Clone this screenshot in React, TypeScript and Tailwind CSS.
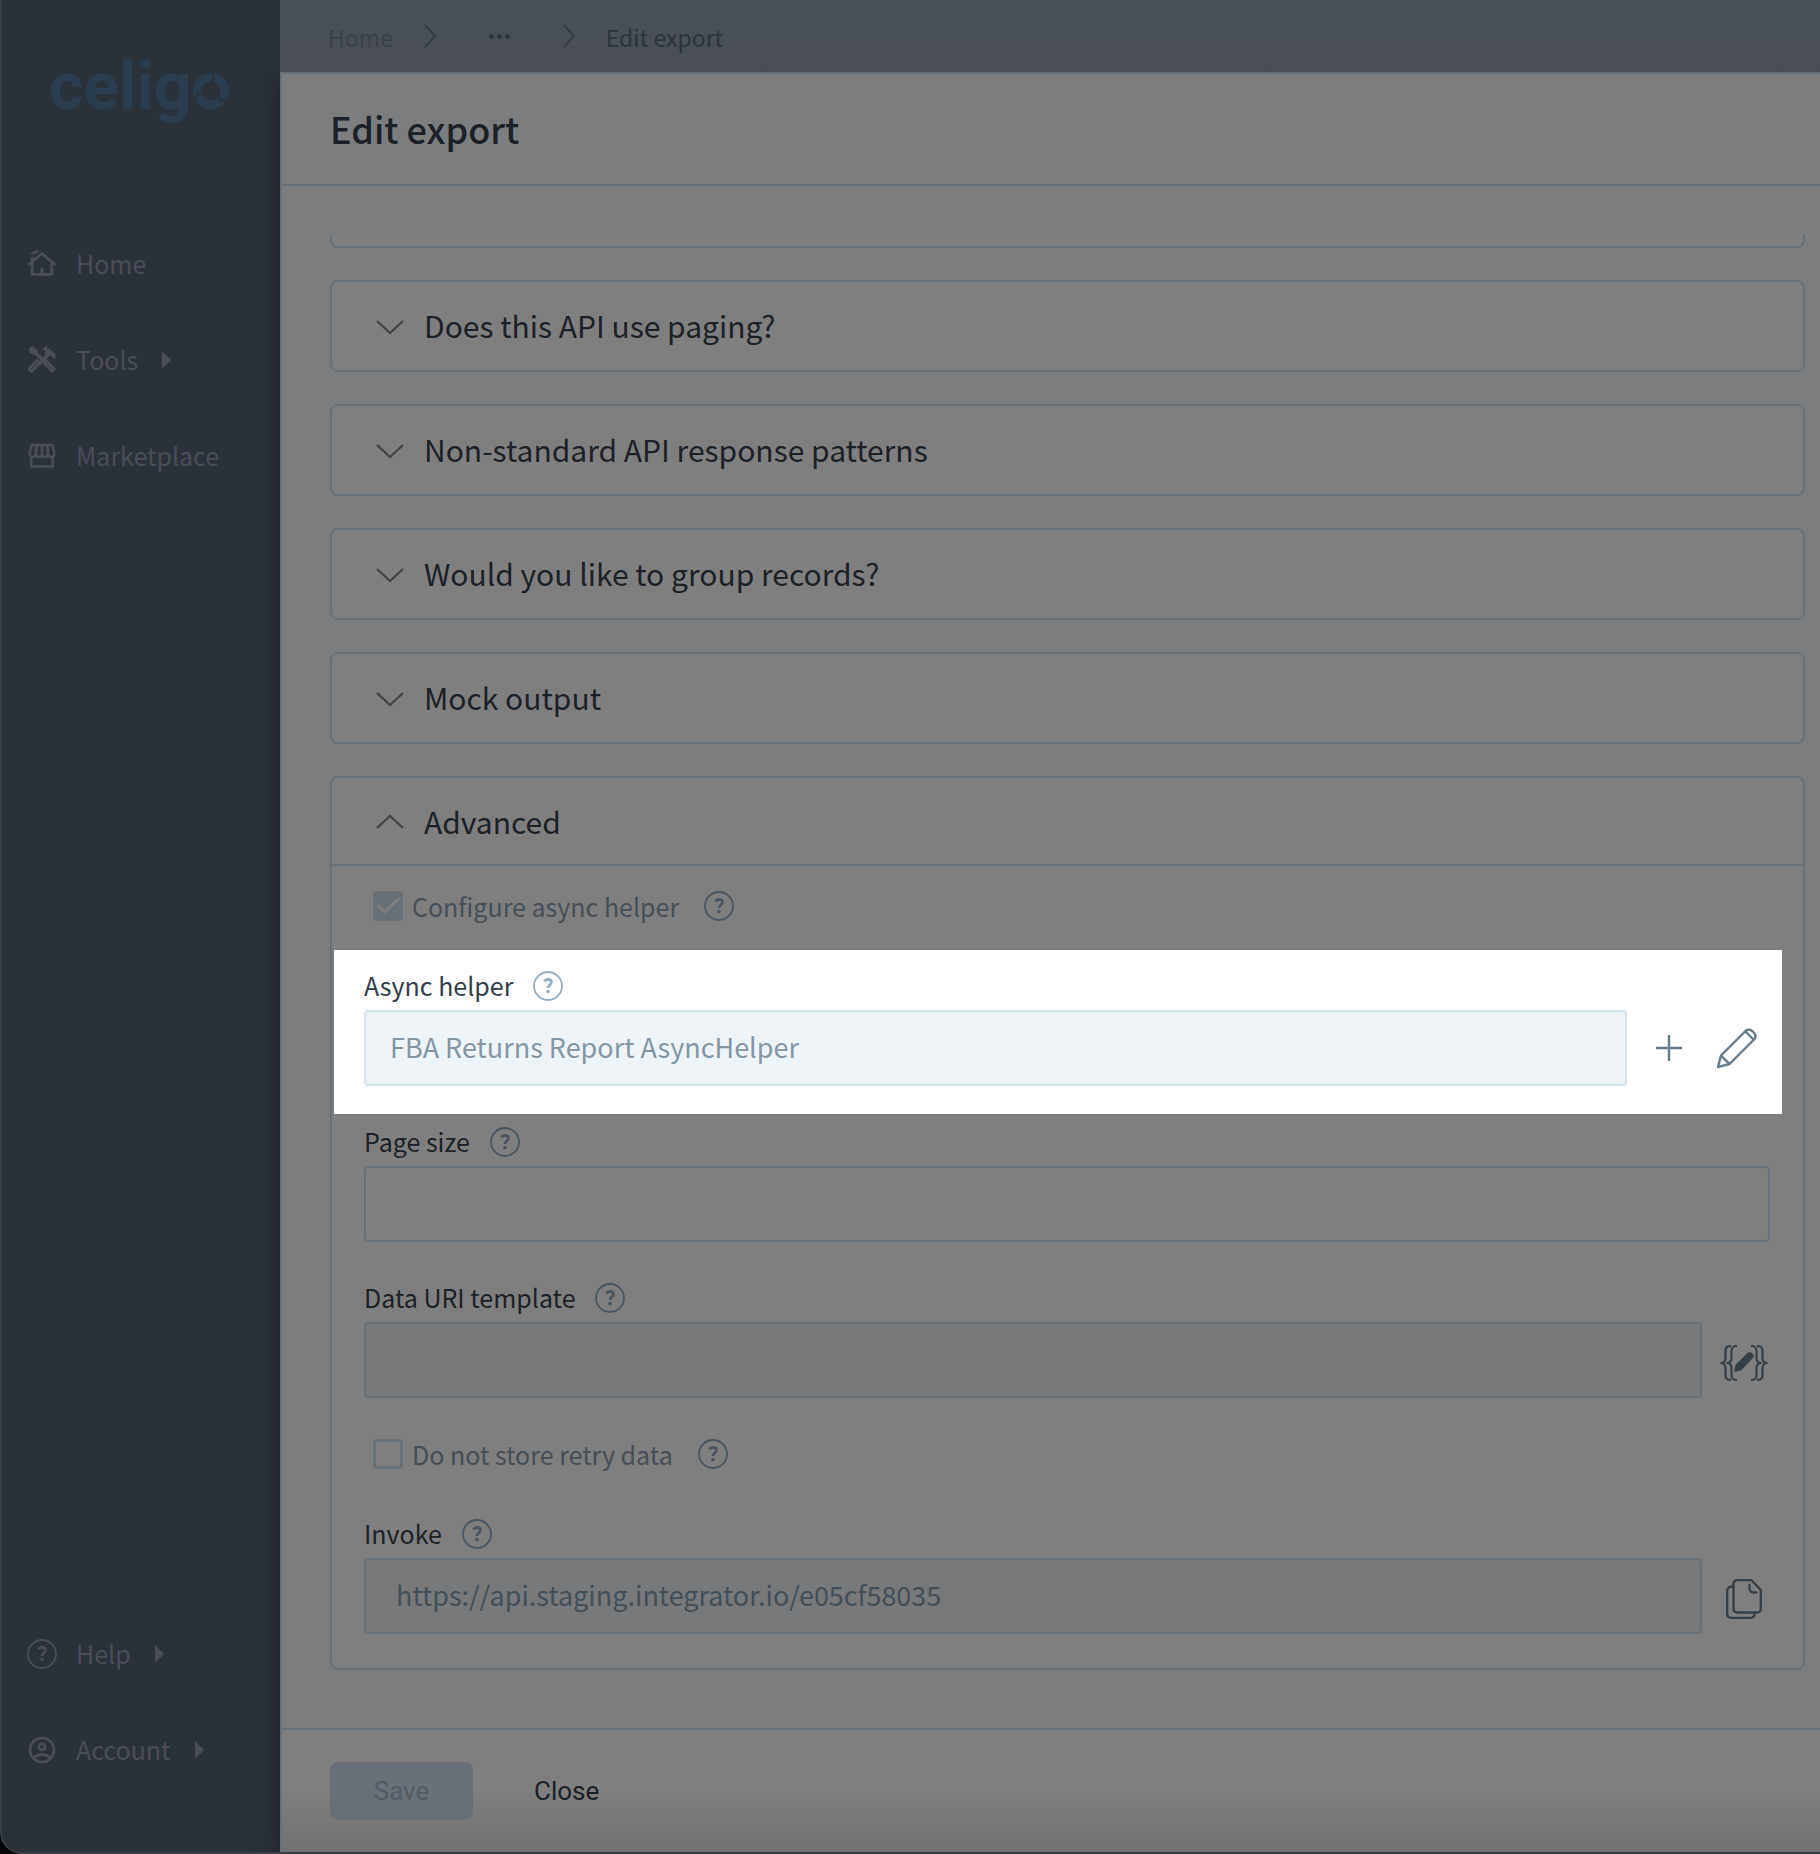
import { useState, type ReactNode } from "react";

const sections = [
  "Does this API use paging?",
  "Non-standard API response patterns",
  "Would you like to group records?",
  "Mock output",
];

const HelpIcon = () => (
  <svg viewBox="0 0 30 30" className="size-[30px] shrink-0" fill="none" stroke="currentColor">
    <circle cx="15" cy="15" r="14" strokeWidth="1.8" />
    <path d="M11.300 10.300c1-1.300 2.200-1.800 3.700-1.800 2 0 3.400 1 3.400 2.800 0 2.500-3.500 2.900-3.400 5.700" strokeWidth="2.800" />
    <circle cx="15" cy="20.600" r="1.800" fill="currentColor" stroke="none" />
  </svg>
);

const HelpButton = ({ label }: { label: string }) => (
  <button type="button" aria-label={label} className="block">
    <HelpIcon />
  </button>
);

const HomeIcon = () => (
  <svg viewBox="0 0 30 30" className="size-[30px]" fill="none" stroke="currentColor" strokeWidth="2.800">
    <path d="M1.500 16 15 4.500 28.500 16" />
    <path d="M5.200 14v11.300h19.600V14M15 25.500v-7" />
    <path d="M5.200 13.500V8" />
    <path d="M5 5.500c.3-2 1.800-2 3.300-2.200C9.800 3 10 2.500 11 1" />
  </svg>
);

const ToolsIcon = () => (
  <svg viewBox="0 0 30 30" className="size-[30px]" fill="none" stroke="currentColor" strokeWidth="2.700" strokeLinejoin="round">
    <path d="m2.500 4.500 2.800-2.700 4.500 3.200.3 3.400-3 .8-3.400-1.400z" fill="currentColor" strokeWidth="1.500" />
    <path d="m8 7.500 8.500 8.500M22.500 8.500 11 20" strokeWidth="3.400" />
    <path d="M15 4.500 20 0v3.500l3 .5 5.500 5.500v4l-2 .3-2.500-3-4 1.200-2.500-3.500 1-3z" fill="currentColor" stroke="none" />
    <path d="m10 15.500 2.500 2.500-8 8.500-2.500-2.500zM19 15.500l-2 2.300 8.200 8.500 2.300-2.300z" />
  </svg>
);

const MarketIcon = () => (
  <svg viewBox="0 0 30 30" className="size-[30px]" fill="none" stroke="currentColor" strokeWidth="2.600">
    <path d="M4.500 4h21l1.800 8.500c.3 4.500-5.600 4.500-6.200.5-.8 4-5.800 4-6.100 0-.3 4-5.300 4-6.100 0-.6 4-6.500 4-6.200-.5z" strokeLinejoin="round" />
    <path d="M15 4v9M9.500 4l-.6 9M20.500 4l.6 9" />
    <path d="M4.300 15.500V25.500h21.400V15.500" strokeLinejoin="round" />
  </svg>
);

const AccountIcon = () => (
  <svg viewBox="0 0 30 30" className="size-[30px]" fill="none" stroke="currentColor" strokeWidth="2.700">
    <circle cx="15" cy="15" r="12" />
    <circle cx="15" cy="11.800" r="3.200" />
    <path d="M6.500 23c2.200-2.300 5-3.300 8.500-3.300s6.300 1 8.500 3.300" />
  </svg>
);

const Caret = () => (
  <svg viewBox="0 0 9 18" className="h-[18px] w-[9px]" fill="currentColor">
    <path d="M0 0v18l9-9z" />
  </svg>
);

const Chevron = ({ up = false }: { up?: boolean }) => (
  <svg viewBox="0 0 28 16" className="mt-[2px] h-4 w-7 text-[#3f4347]" fill="none" stroke="currentColor" strokeWidth="2.200">
    <path d={up ? "m1 14 13-12 13 12" : "m1 2 13 12L27 2"} />
  </svg>
);

const CrumbArrow = () => (
  <svg viewBox="0 0 14 24" className="h-6 w-[14px] text-[#363d44]" fill="none" stroke="currentColor" strokeWidth="2">
    <path d="m2 1 10 11L2 23" />
  </svg>
);

const NavLink = ({ icon, label, caret }: { icon: ReactNode; label: string; caret?: boolean }) => (
  <a href="#" className="flex h-24 items-center pl-[25px]">
    {icon}
    <span className="ml-[19px] pb-[2px] text-[25px] leading-8">{label}</span>
    {caret && <span className="ml-6"><Caret /></span>}
  </a>
);

const Logo = () => (
  <div className="flex h-[70px] items-center pl-[47px] text-[#293d4e]">
    <span className="font-[Roboto,sans-serif] text-[66px] leading-[70px] font-bold">celig</span>
    <svg viewBox="0 0 38 38" className="mt-2 size-[38px]" fill="none" strokeWidth="8.500">
      <circle cx="19" cy="19" r="13.800" stroke="currentColor" />
      <g stroke="#2b3138" strokeWidth="2.200">
        <path d="m18.500-1 4 7-4 7" />
        <path d="m18.500-1 4 7-4 7" transform="rotate(120 19 19)" />
        <path d="m18.500-1 4 7-4 7" transform="rotate(240 19 19)" />
      </g>
    </svg>
  </div>
);

const fieldClass =
  "h-[76px] min-w-0 flex-1 rounded-[4px] border-2 px-6 pb-1 text-[27px] outline-none";

const FieldLabel = ({ id, label }: { id: string; label: string }) => (
  <div className="flex h-[39px] items-start gap-5">
    <label htmlFor={id} className="text-[25px] leading-7">{label}</label>
    <HelpButton label={`Help: ${label}`} />
  </div>
);

const CheckRow = ({ id, label, checked = false }: { id: string; label: string; checked?: boolean }) => (
  <>
    <span className="relative size-[30px]">
      <input
        id={id}
        type="checkbox"
        defaultChecked={checked}
        disabled
        className="block size-[30px] appearance-none rounded-[3px] border-3 border-[#687177] checked:bg-[#687177]"
      />
      {checked && (
        <svg viewBox="0 0 30 30" className="absolute inset-0 text-[#7f7f7f]" fill="none" stroke="currentColor" strokeWidth="3">
          <path d="m4.500 14 7 7L26 7.500" />
        </svg>
      )}
    </span>
    <label htmlFor={id} className="mr-[25px] ml-[9px] text-[25px] leading-[30px] text-[#464f57]">{label}</label>
    <HelpButton label={`Help: ${label}`} />
  </>
);

const App = () => {
  const [pageSize, setPageSize] = useState("");

  return (
    <div className="min-h-screen bg-[#05070b] font-['Noto_Sans_CJK_SC','Open_Sans',sans-serif]">
      <div className="flex min-h-screen overflow-hidden rounded-bl-[22px] border-b-2 border-l-2 border-[#3a3f44] bg-[#2b3138]">
        {/* Sidebar */}
        <nav className="flex w-[278px] shrink-0 flex-col text-[#4a4d57]">
          <div className="pt-[52px]">
            <Logo />
          </div>
          <div className="mt-[94px]">
            <NavLink icon={<HomeIcon />} label="Home" />
            <NavLink icon={<ToolsIcon />} label="Tools" caret />
            <NavLink icon={<MarketIcon />} label="Marketplace" />
          </div>
          <div className="mt-auto pb-[54px]">
            <NavLink icon={<HelpIcon />} label="Help" caret />
            <NavLink icon={<AccountIcon />} label="Account" caret />
          </div>
        </nav>

        <div className="flex min-w-0 flex-1 flex-col">
          {/* Breadcrumbs */}
          <header className="relative z-10 flex h-[72px] items-center bg-linear-to-b from-[#4a5158] to-[#4a4e57] pl-12 text-[23px] leading-8 text-[#3a4148]">
            <a href="#" className="pt-[2px]">Home</a>
            <span className="ml-[30px]"><CrumbArrow /></span>
            <button type="button" aria-label="More" className="ml-[52px] flex gap-[3px] text-[#2f353d]">
              <span className="size-[5px] rounded-full bg-current" />
              <span className="size-[5px] rounded-full bg-current" />
              <span className="size-[5px] rounded-full bg-current" />
            </button>
            <span className="ml-[52px]"><CrumbArrow /></span>
            <span className="ml-[30px] pt-[2px] text-[#2c333b]">Edit export</span>
          </header>

          {/* Drawer */}
          <main className="flex flex-1 flex-col border-t-2 border-l-2 border-[#687177] bg-[#7c7d7f] text-[#1b2127] shadow-[-2px_8px_20px_rgba(25,25,40,0.6)]">
            <div className="flex h-[112px] items-center border-b-2 border-[#687177] pb-[2px] pl-12">
              <h1 className="text-[36px] leading-10 font-medium">Edit export</h1>
            </div>

            <div className="flex-1 pt-12 pr-[15px] pb-[58px] pl-12">
              <div className="mb-8 h-[14px] rounded-b-[8px] border-2 border-t-0 border-[#687177] bg-[#7f7f7f]" />
              <div className="flex flex-col gap-8">
                {sections.map((title) => (
                  <button
                    key={title}
                    type="button"
                    className="flex h-[92px] w-full items-center gap-5 rounded-[8px] border-2 border-[#687177] bg-[#7f7f7f] pl-11 text-left text-[30px]"
                  >
                    <Chevron />
                    <span className="pb-[2px]">{title}</span>
                  </button>
                ))}

                <section className="rounded-[8px] border-2 border-[#687177] bg-[#7f7f7f] pb-[34px] [&_button]:text-inherit">
                  <button
                    type="button"
                    className="flex h-[88px] w-full items-center gap-5 border-b-2 border-[#687177] pl-11 text-left text-[30px]"
                  >
                    <Chevron up />
                    Advanced
                  </button>

                  <div className="flex h-[84px] items-center pb-1 pl-[41px] text-[#4a5763]">
                    <CheckRow id="configure" label="Configure async helper" checked />
                  </div>

                  {/* Highlighted field */}
                  <div className="mr-[21px] ml-[2px] h-[164px] bg-white pt-[21px] pr-[25px] pl-[30px] text-[#97afc3] [&_label]:text-[#323d4a]">
                    <FieldLabel id="async" label="Async helper" />
                    <div className="flex items-center text-[#677c8a]">
                      <input
                        id="async"
                        readOnly
                        value="FBA Returns Report AsyncHelper"
                        className={`${fieldClass} border-[#d6e4ed] bg-[#eff4f9] text-[#8496a4]`}
                      />
                      <button type="button" aria-label="Add" className="ml-[29px]">
                        <svg viewBox="0 0 26 26" className="size-[26px]" stroke="currentColor" strokeWidth="2.400">
                          <path d="M13 0v26M0 13h26" />
                        </svg>
                      </button>
                      <button type="button" aria-label="Edit" className="ml-[35px]">
                        <svg viewBox="0 0 40 40" className="size-10" fill="none" stroke="currentColor" strokeWidth="2.400" strokeLinejoin="round">
                          <path d="M1 39 4 27.500 29 2.500c4-3.500 12 4 8.500 8.500l-25 25z" />
                          <path d="m4 27.500 8.500 8.500M28.500 3.500l8.500 8.500" />
                        </svg>
                      </button>
                    </div>
                  </div>

                  <div className="pr-[33px] pl-8 text-[#4a5763] [&_label]:text-[#1b2127]">
                    <div className="pt-[13px]">
                      <FieldLabel id="page-size" label="Page size" />
                      <div className="flex">
                        <input
                          id="page-size"
                          value={pageSize}
                          onChange={(e) => setPageSize(e.target.value)}
                          className={`${fieldClass} border-[#687177]`}
                        />
                      </div>
                    </div>

                    <div className="pt-[41px]">
                      <FieldLabel id="data-uri" label="Data URI template" />
                      <div className="flex items-center">
                        <input id="data-uri" readOnly className={`${fieldClass} border-[#687177] bg-[#78797b]`} />
                        <button type="button" aria-label="Open template editor" className="mt-[6px] mr-[2px] ml-[18px]">
                          <svg viewBox="0 0 48 36" className="h-9 w-12 text-[#343f48]" fill="none" stroke="currentColor" strokeWidth="2.200">
                            <path d="M11 1C6.500 1 5.500 2.500 5.500 6v7c0 3-1.500 5-5 5 3.500 0 5 2 5 5v7c0 3.500 1 5 5.500 5" />
                            <path d="M17 1c-4.500 0-5.500 1.500-5.500 5v7c0 3-1.500 5-5 5 3.500 0 5 2 5 5v7c0 3.500 1 5 5.500 5" />
                            <path d="M31 1c4.500 0 5.500 1.500 5.500 5v7c0 3 1.500 5 5 5-3.500 0-5 2-5 5v7c0 3.500-1 5-5.500 5" />
                            <path d="M37 1c4.500 0 5.500 1.500 5.500 5v7c0 3 1.500 5 5 5-3.500 0-5 2-5 5v7c0 3.500-1 5-5.500 5" />
                            <path d="m14 27 1.500-7L27.500 8c3-2.500 8 2 5.500 5L21 25.500z" fill="currentColor" stroke="none" />
                          </svg>
                        </button>
                      </div>
                    </div>

                    <div className="flex h-[121px] items-center pb-[9px] pl-[9px] [&_label]:text-[#464f57]">
                      <CheckRow id="retry" label="Do not store retry data" />
                    </div>

                    <FieldLabel id="invoke" label="Invoke" />
                    <div className="flex items-center">
                      <input
                        id="invoke"
                        readOnly
                        value="https://api.staging.integrator.io/e05cf58035"
                        className={`${fieldClass} border-[#687177] bg-[#78797b] pl-[30px] text-[#424f59]`}
                      />
                      <button type="button" aria-label="Copy" className="mt-[6px] mr-2 ml-6">
                        <svg viewBox="0 0 36 40" className="h-10 w-9 text-[#343f48]" fill="none" stroke="currentColor" strokeWidth="2.300" strokeLinejoin="round" strokeLinecap="round">
                          <path d="M11.500 1.200h14L34.800 11v18.500q0 4-4 4H11.500q-4 0-4-4V5.200q0-4 4-4z" />
                          <path d="M7.500 7.500c-4.500 0-6.300 1-6.300 4.500v22.800q0 4 4 4h19.500q4 0 4-5" />
                          <path d="M23.500 6v3q0 4.500 4.500 4.500h2.500" />
                        </svg>
                      </button>
                    </div>
                  </div>
                </section>
              </div>
            </div>

            <footer className="flex h-[124px] items-start border-t-2 border-[#687177] bg-linear-to-b from-[#7f7f7f] from-50% to-[#727272] pt-8 pl-12 font-[Roboto,sans-serif] text-[26px]">
              <button type="button" disabled className="h-[58px] w-[143px] rounded-[8px] bg-linear-to-b from-[#6a7079] to-[#687074] text-[#4f5b65]">
                Save
              </button>
              <button type="button" className="ml-[61px] h-[58px]">Close</button>
            </footer>
          </main>
        </div>
      </div>
    </div>
  );
};

export default App;
